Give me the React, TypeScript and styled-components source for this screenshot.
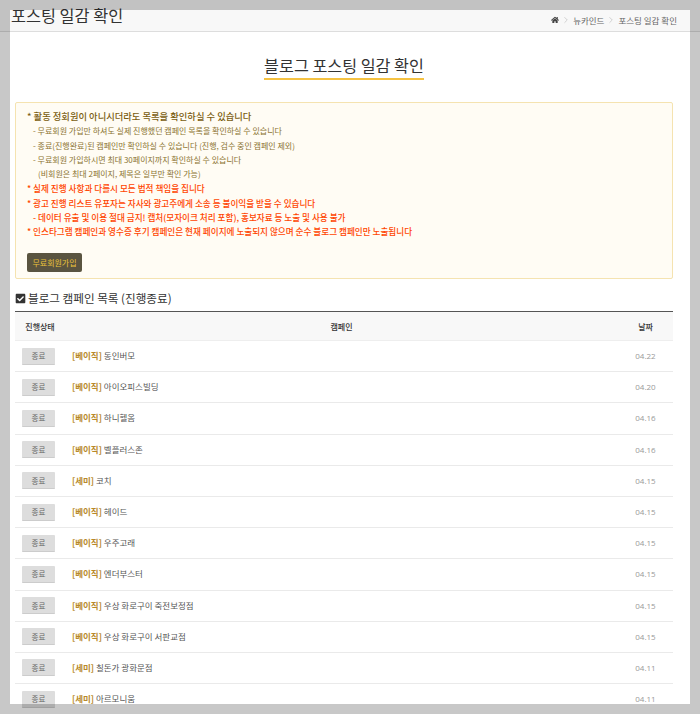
import styled, { createGlobalStyle } from "styled-components";
import { FaCheckSquare, FaHome } from "react-icons/fa";
import { ChevronRight } from "lucide-react";

const GlobalStyle = createGlobalStyle`
  html, body { margin: 0; padding: 0; height: 100%; overflow: hidden; background: #fff; }
  body { font-family: "Noto Sans CJK KR", "Noto Sans", sans-serif; color: #333; }
`;

const rows = [
  { type: "베이직", name: "동인버모", date: "04.22" },
  { type: "베이직", name: "아이오피스빌딩", date: "04.20" },
  { type: "베이직", name: "하니헬옴", date: "04.16" },
  { type: "베이직", name: "벨플러스존", date: "04.16" },
  { type: "세미", name: "코치", date: "04.15" },
  { type: "베이직", name: "헤이드", date: "04.15" },
  { type: "베이직", name: "우주고래", date: "04.15" },
  { type: "베이직", name: "엔더부스터", date: "04.15" },
  { type: "베이직", name: "우상 화로구이 죽전보정점", date: "04.15" },
  { type: "베이직", name: "우상 화로구이 서판교점", date: "04.15" },
  { type: "세미", name: "칠돈가 광화문점", date: "04.11" },
  { type: "세미", name: "아르모니움", date: "04.11" },
];

const App = () => {
  return (
    <>
      <GlobalStyle />
      <Page>
        <TopBar>
          <PageTitle>포스팅 일감 확인</PageTitle>
          <Crumbs>
            <FaHome size={8} color="#444" />
            <ChevronRight size={10} strokeWidth={1} color="#999" />
            <span>뉴카인드</span>
            <ChevronRight size={10} strokeWidth={1} color="#999" />
            <span>포스팅 일감 확인</span>
          </Crumbs>
        </TopBar>
        <Content>
          <HeadingRow>
            <Heading>블로그 포스팅 일감 확인</Heading>
          </HeadingRow>
          <Notice>
            <NoticeLine $tone="strong">* 활동 정회원이 아니시더라도 목록을 확인하실 수 있습니다</NoticeLine>
            <NoticeLine $indent={6}>- 무료회원 가입만 하셔도 실제 진행했던 캠페인 목록을 확인하실 수 있습니다</NoticeLine>
            <NoticeLine $indent={6}>- 종료(진행완료)된 캠페인만 확인하실 수 있습니다 (진행, 검수 중인 캠페인 제외)</NoticeLine>
            <NoticeLine $indent={6}>- 무료회원 가입하시면 최대 30페이지까지 확인하실 수 있습니다</NoticeLine>
            <NoticeLine $indent={11}>(비회원은 최대 2페이지, 제목은 일부만 확인 가능)</NoticeLine>
            <NoticeLine $tone="alert">* 실제 진행 사항과 다를시 모든 법적 책임을 집니다</NoticeLine>
            <NoticeLine $tone="alert">* 광고 진행 리스트 유포자는 자사와 광고주에게 소송 등 불이익을 받을 수 있습니다</NoticeLine>
            <NoticeLine $tone="alert" $indent={6}>- 데이터 유출 및 이용 절대 금지! 캡처(모자이크 처리 포함), 홍보자료 등 노출 및 사용 불가</NoticeLine>
            <NoticeLine $tone="alert">* 인스타그램 캠페인과 영수증 후기 캠페인은 현재 페이지에 노출되지 않으며 순수 블로그 캠페인만 노출됩니다</NoticeLine>
            <JoinButton>무료회원가입</JoinButton>
          </Notice>
          <SectionTitle>
            <FaCheckSquare size={11} color="#333" />
            블로그 캠페인 목록 (진행종료)
          </SectionTitle>
          <Table>
            <thead>
              <tr>
                <HeadCell $width={50}>진행상태</HeadCell>
                <HeadCell>캠페인</HeadCell>
                <HeadCell $width={55}>날짜</HeadCell>
              </tr>
            </thead>
            <tbody>
              {rows.map((row) => (
                <Row key={row.name}>
                  <StatusCell>
                    <StatusButton>종료</StatusButton>
                  </StatusCell>
                  <NameCell>
                    <TypeLabel>[{row.type}]</TypeLabel> {row.name}
                  </NameCell>
                  <DateCell>{row.date}</DateCell>
                </Row>
              ))}
            </tbody>
          </Table>
        </Content>
      </Page>
      <Frame />
    </>
  );
};

export default App;

const Page = styled.div`
  height: 714px;
  overflow: hidden;
`;

const TopBar = styled.header`
  height: 31px;
  box-sizing: content-box;
  display: flex;
  justify-content: space-between;
  align-items: flex-start;
  padding: 0 23px 0 11px;
  background: #f8f8f8;
  border-bottom: 1px solid #ddd;
`;

const PageTitle = styled.h2`
  margin: 0;
  font-size: 16.3px;
  font-weight: 400;
  line-height: 30px;
  color: #333;
`;

const Crumbs = styled.nav`
  display: flex;
  align-items: center;
  gap: 2px;
  margin-top: 10px;
  height: 20px;
  font-size: 8.5px;
  color: #666;
`;

const Content = styled.main`
  padding: 0 27px 0 15px;
`;

const HeadingRow = styled.div`
  display: flex;
  justify-content: center;
  padding-top: 21px;
  margin-bottom: 22px;
`;

const Heading = styled.h1`
  margin: 0;
  font-size: 16.2px;
  font-weight: 400;
  line-height: 25px;
  color: #333;
  border-bottom: 2px solid #f5c242;
`;

const Notice = styled.div`
  box-sizing: border-box;
  height: 177px;
  padding: 6px 11px;
  background: #fffcf4;
  border: 1px solid #f5e3b0;
  border-radius: 2px;
`;

const toneSize = { strong: 9.3, alert: 8.6, plain: 8 };

const NoticeLine = styled.div<{ $tone?: "strong" | "alert"; $indent?: number }>`
  font-size: ${(p) => toneSize[p.$tone ?? "plain"]}px;
  line-height: 14.3px;
  white-space: nowrap;
  padding-left: ${(p) => p.$indent ?? 0}px;
  padding-bottom: ${(p) => (p.$tone === "strong" ? 1 : 0)}px;
  font-weight: ${(p) => (p.$tone ? 500 : 400)};
  color: ${(p) => (p.$tone === "alert" ? "#ff4500" : p.$tone === "strong" ? "#7a5c10" : "#8a7330")};
`;

const JoinButton = styled.button`
  display: block;
  margin-top: 14px;
  width: 55px;
  height: 19px;
  padding: 0;
  border: 0;
  border-radius: 2px;
  background: #5a5440;
  color: #eac23a;
  font-family: inherit;
  font-size: 8px;
`;

const SectionTitle = styled.h3`
  display: flex;
  align-items: center;
  gap: 2px;
  margin: 9px 0 0;
  height: 20px;
  font-size: 11.6px;
  font-weight: 400;
  color: #333;
`;

const Table = styled.table`
  width: 100%;
  table-layout: fixed;
  margin-top: 3px;
  border-collapse: collapse;
  border-top: 1px solid #555;
`;

const HeadCell = styled.th<{ $width?: number }>`
  height: 28px;
  padding: 0;
  width: ${(p) => (p.$width ? `${p.$width}px` : "auto")};
  background: #f8f8f8;
  border-bottom: 1px solid #eee;
  font-size: 8px;
  font-weight: 500;
  color: #333;
`;

const Row = styled.tr`
  height: 31.2px;
  border-bottom: 1px solid #eaeaea;
`;

const StatusCell = styled.td`
  padding: 0 0 0 7px;
`;

const StatusButton = styled.button`
  display: block;
  width: 33px;
  height: 17px;
  padding: 0;
  border: 0;
  border-bottom: 1px solid #ccc;
  border-radius: 1px;
  background: #ddd;
  color: #666;
  font-family: inherit;
  font-size: 7.5px;
`;

const NameCell = styled.td`
  padding: 0 0 2px 7px;
  font-size: 8.5px;
  color: #555;
`;

const TypeLabel = styled.span`
  font-weight: 700;
  color: #b8892a;
`;

const DateCell = styled.td`
  padding: 0 0 1px;
  text-align: center;
  font-family: "Open Sans", sans-serif;
  font-size: 8px;
  color: #999;
`;

const Frame = styled.div`
  position: fixed;
  inset: 0;
  border: 10px solid rgba(0, 0, 0, 0.215);
  pointer-events: none;
`;
